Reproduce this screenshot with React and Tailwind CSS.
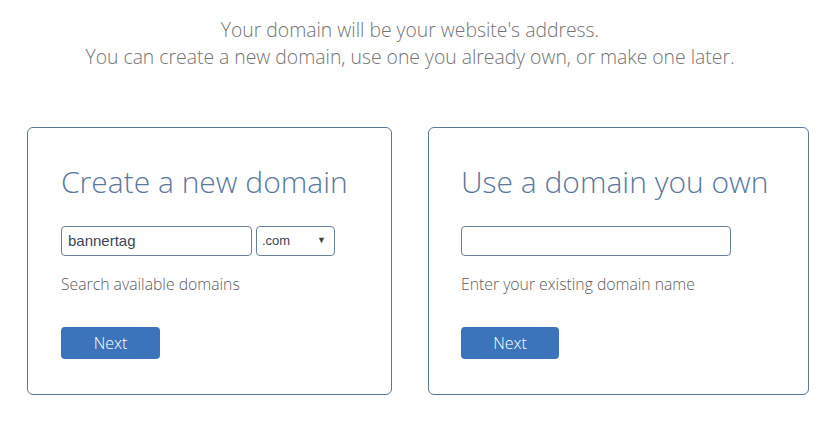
export default function App() {
  return (
    <div className="w-[831px] h-[423px] bg-white overflow-hidden" style={{ fontFamily: '"Open Sans", sans-serif' }}>
      <div className="pt-[16px] pr-[11px] text-center text-[19.35px] leading-[27px] text-[#747474] font-light">
        <p>Your domain will be your website's address.</p>
        <p>You can create a new domain, use one you already own, or make one later.</p>
      </div>

      <div className="flex gap-[36px] pl-[27px] mt-[57px]">
        <div className="w-[365px] h-[268px] border border-[#5b7893] rounded-[6px] pl-[33px] pt-[34px]">
          <h2 className="text-[30px] leading-[40px] font-light text-[#5a78a0]">Create a new domain</h2>
          <div className="flex gap-[4px] mt-[24px]">
            <div
              className="w-[191px] h-[30px] border border-[#6a8299] rounded-[4px] px-[6px] flex items-center text-[15px] text-[#3a4656]"
              style={{ fontFamily: '"Liberation Sans", Arial, sans-serif' }}
            >
              bannertag
            </div>
            <div
              className="w-[79px] h-[30px] border border-[#6a8299] rounded-[4px] pl-[5px] pr-[8px] flex items-center justify-between text-[13px] text-[#3a4656]"
              style={{ fontFamily: '"Liberation Sans", Arial, sans-serif' }}
            >
              <span>.com</span>
              <span className="text-[9px] text-[#444]">▼</span>
            </div>
          </div>
          <p className="mt-[17px] text-[15.75px] font-light text-[#5c5c5c]">Search available domains</p>
          <button className="mt-[30px] w-[99px] h-[32px] rounded-[4px] bg-[#3b74ba] text-white text-[16px] font-light">Next</button>
        </div>

        <div className="w-[381px] h-[268px] border border-[#5b7893] rounded-[6px] pl-[32px] pt-[34px]">
          <h2 className="text-[30px] leading-[40px] font-light text-[#5a78a0]">Use a domain you own</h2>
          <div className="mt-[24px] w-[270px] h-[30px] border border-[#6a8299] rounded-[4px]" />
          <p className="mt-[17px] text-[15.75px] font-light text-[#5c5c5c]">Enter your existing domain name</p>
          <button className="mt-[30px] w-[98px] h-[32px] rounded-[4px] bg-[#3b74ba] text-white text-[16px] font-light">Next</button>
        </div>
      </div>
    </div>
  );
}
